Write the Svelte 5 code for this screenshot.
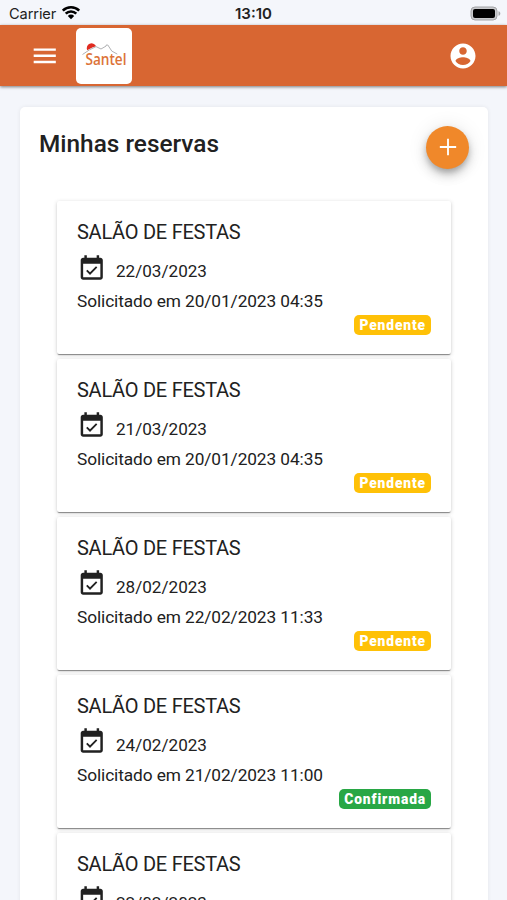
<script lang="ts">
    type Reserva = { local: string; data: string; solicitado: string; status: string };

    const reservas: Reserva[] = [
        { local: "SALÃO DE FESTAS", data: "22/03/2023", solicitado: "20/01/2023 04:35", status: "Pendente" },
        { local: "SALÃO DE FESTAS", data: "21/03/2023", solicitado: "20/01/2023 04:35", status: "Pendente" },
        { local: "SALÃO DE FESTAS", data: "28/02/2023", solicitado: "22/02/2023 11:33", status: "Pendente" },
        { local: "SALÃO DE FESTAS", data: "24/02/2023", solicitado: "21/02/2023 11:00", status: "Confirmada" },
        { local: "SALÃO DE FESTAS", data: "22/02/2023", solicitado: "20/02/2023 10:12", status: "Pendente" },
    ];
</script>

<div class="screen">
    <div class="status-bar">
        <div class="carrier">
            <span>Carrier</span>
            <svg width="20" height="15" viewBox="0 0 20 15">
                <path d="M1.8 5.6a11.8 11.8 0 0 1 16.4 0" />
                <path d="M4.7 8.7a7.5 7.5 0 0 1 10.6 0" />
                <path class="dot" d="M6.8 10.9a4.6 4.6 0 0 1 6.4 0L10 14.2z" />
            </svg>
        </div>
        <span class="time">13:10</span>
        <div class="battery">
            <svg width="31" height="16" viewBox="0 0 31 16">
                <rect x="1" y="1" width="26" height="13" rx="4" fill="#c9cacd" stroke="#a3a4a7" />
                <rect x="3" y="3" width="22" height="9" rx="2" fill="#000" />
                <path d="M28.5 5.2c2.4.7 2.4 3.9 0 4.6z" fill="#a3a4a7" />
            </svg>
        </div>
    </div>

    <header class="toolbar">
        <button class="icon-button" aria-label="Menu">
            <svg width="29.5" height="29.5" viewBox="0 0 24 24">
                <path d="M3 18h18v-2H3v2zm0-5h18v-2H3v2zm0-7v2h18V6H3z" fill="#fff" />
            </svg>
        </button>
        <div class="logo">
            <svg width="56" height="56" viewBox="0 0 56 56">
                <path d="M11.2 22.3a4.6 4.6 0 0 1 8.9-4.1l-3.8 1.4z" fill="#e02b20" />
                <path
                    d="M6.5 26.5l7-4.7 6.5-3.2 5 2.4 5.2-3v-1h1.6l4 6.1 5.5 3"
                    fill="none"
                    stroke="#b1b2b4"
                    stroke-width="1"
                />
                <text x="9.5" y="36.6" textLength="41" lengthAdjust="spacingAndGlyphs">Santel</text>
            </svg>
        </div>
        <button class="icon-button account" aria-label="Conta">
            <svg width="30" height="30" viewBox="0 0 24 24">
                <path
                    d="M12 2C6.48 2 2 6.48 2 12s4.48 10 10 10 10-4.48 10-10S17.52 2 12 2zm0 3c1.66 0 3 1.34 3 3s-1.34 3-3 3-3-1.34-3-3 1.34-3 3-3zm0 14.2c-2.5 0-4.71-1.28-6-3.22.03-1.99 4-3.08 6-3.08 1.99 0 5.97 1.09 6 3.08-1.29 1.94-3.5 3.22-6 3.22z"
                    fill="#fff"
                />
            </svg>
        </button>
    </header>

    <main class="panel">
        <div class="panel-header">
            <h1>Minhas reservas</h1>
            <button class="add" aria-label="Nova reserva">
                <svg width="28" height="28" viewBox="0 0 24 24">
                    <path d="M19 12.8h-6.2V19h-1.6v-6.2H5v-1.6h6.2V5h1.6v6.2H19z" fill="#fff" />
                </svg>
            </button>
        </div>

        <div class="list">
            {#each reservas as reserva}
                <div class="card">
                    <h2>{reserva.local}</h2>
                    <div class="date">
                        <svg width="29.5" height="29.5" viewBox="0 0 24 24">
                            <path
                                d="M16.53 11.06L15.47 10l-4.88 4.88-2.12-2.12-1.06 1.06L10.59 17l5.94-5.94zM19 3h-1V1h-2v2H8V1H6v2H5c-1.11 0-1.99.9-1.99 2L3 19c0 1.1.89 2 2 2h14c1.1 0 2-.9 2-2V5c0-1.1-.9-2-2-2zm0 16H5V8h14v11z"
                                fill="#212121"
                            />
                        </svg>
                        <span>{reserva.data}</span>
                    </div>
                    <p>Solicitado em {reserva.solicitado}</p>
                    <span class="badge" class:confirmed={reserva.status === "Confirmada"}>{reserva.status}</span>
                </div>
            {/each}
        </div>
    </main>
</div>

<style>
    :global(body) {
        background: #f4f6fb;
        overflow: hidden;
    }

    .screen {
        height: 900px;
        overflow: hidden;
        background: #f4f6fb;
        font-family: Roboto, sans-serif;
        color: #212121;
    }

    .status-bar {
        display: grid;
        grid-template-columns: 1fr auto 1fr;
        align-items: center;
        height: 25px;
        padding: 0 6px 0 9px;
        font-family: Inter, sans-serif;
        font-size: 15px;
    }

    .carrier {
        display: flex;
        align-items: center;
        gap: 5px;
        padding-top: 2px;
        font-size: 14.6px;
        letter-spacing: -0.1px;
    }

    .carrier svg {
        margin-top: -3px;
        fill: none;
        stroke: #000;
        stroke-width: 2.6;
    }

    .carrier .dot {
        fill: #000;
        stroke: none;
    }

    .time {
        padding: 2px 3px 0 0;
        font-weight: 600;
        font-size: 15px;
    }

    .battery {
        display: flex;
        justify-content: flex-end;
        padding-top: 2px;
    }

    .toolbar {
        display: flex;
        align-items: center;
        height: 61px;
        padding: 0 29px 0 30px;
        background: #d86632;
        box-shadow: 0 1px 3px rgba(0, 0, 0, 0.5);
    }

    button {
        display: flex;
        align-items: center;
        justify-content: center;
        padding: 0;
        border: 0;
        background: none;
    }

    .logo {
        width: 56px;
        height: 56px;
        margin-left: 16px;
        border-radius: 5px;
        background: #fff;
    }

    .logo text {
        font: 600 15.5px "Open Sans", sans-serif;
        fill: #dc7338;
    }

    .account {
        margin-left: auto;
    }

    .panel {
        height: 900px;
        margin: 20.5px 19px 0 20px;
        border-radius: 5px;
        background: #fff;
        box-shadow: 0 0 4px rgba(0, 0, 0, 0.07);
    }

    .panel-header {
        display: flex;
        justify-content: space-between;
        padding: 19px 19px 0;
    }

    h1 {
        margin: 3px 0 0;
        font-size: 24.4px;
        line-height: 30px;
        font-weight: 500;
    }

    .add {
        width: 43px;
        height: 43px;
        border-radius: 50%;
        background: #f0882a;
        box-shadow:
            0 4px 6px -1px rgba(0, 0, 0, 0.25),
            0 7px 12px rgba(0, 0, 0, 0.14),
            0 1px 20px rgba(0, 0, 0, 0.1);
    }

    .list {
        display: flex;
        flex-direction: column;
        gap: 4.9px;
        padding: 32.5px 37px 0;
    }

    .card {
        display: flex;
        flex-direction: column;
        box-sizing: border-box;
        height: 153px;
        padding: 17px 20px 0;
        border-radius: 2px;
        background: #fff;
        box-shadow:
            0 2px 1px -1px rgba(0, 0, 0, 0.3),
            0 1px 1px rgba(0, 0, 0, 0.16),
            0 1px 4px rgba(0, 0, 0, 0.18);
    }

    h2 {
        margin: 0;
        font-size: 20px;
        line-height: 28px;
        font-weight: 400;
        letter-spacing: -0.26px;
    }

    .date {
        display: flex;
        gap: 10px;
        height: 38px;
        margin-left: -0.5px;
        font-size: 17.1px;
        line-height: 50px;
    }

    .date svg {
        margin-top: 7.5px;
    }

    p {
        margin: 4px 0 0;
        font-size: 17.3px;
        line-height: 26px;
        letter-spacing: -0.09px;
    }

    .badge {
        align-self: flex-end;
        height: 20px;
        margin-top: 1px;
        padding: 0 5px;
        border-radius: 5px;
        background: #ffc107;
        color: #fff;
        font-size: 13.8px;
        line-height: 20px;
        font-weight: 900;
        letter-spacing: 0.88px;
    }

    .confirmed {
        background: #28a745;
    }
</style>
